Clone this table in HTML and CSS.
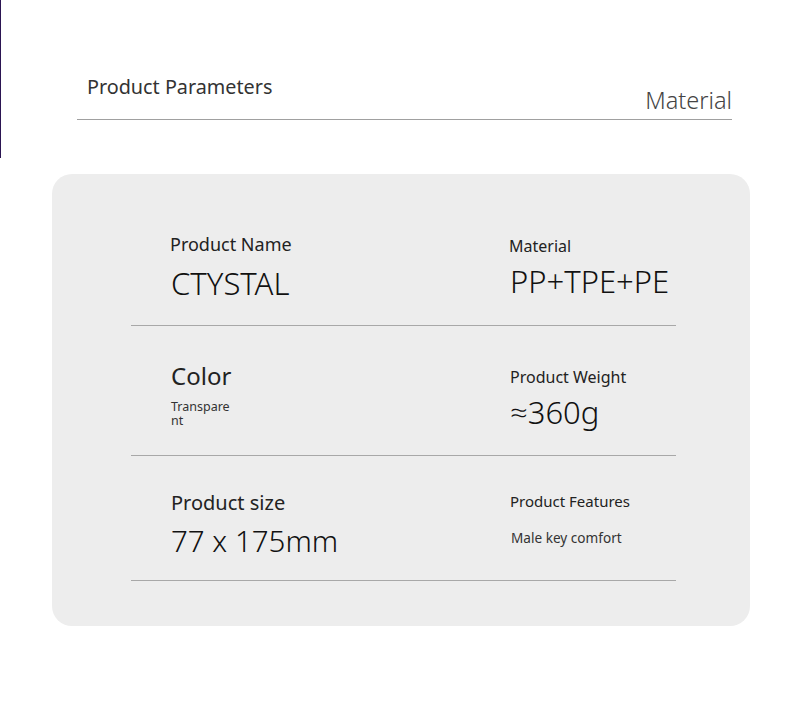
FILE: index.html
```html
<!DOCTYPE html>
<html lang="en">
<head>
<meta charset="utf-8">
<title>Product Parameters</title>
<link rel="stylesheet" href="styles.css">
</head>
<body>
<header class="header">
  <div class="header-bar">
    <h1 class="title">Product Parameters</h1>
    <div class="subtitle">Material</div>
  </div>
</header>
<section class="card">
  <div class="row row-1">
    <div class="cell">
      <div class="label label-md">Product Name</div>
      <div class="value">CTYSTAL</div>
    </div>
    <div class="cell">
      <div class="label label-sm">Material</div>
      <div class="value">PP+TPE+PE</div>
    </div>
  </div>
  <div class="row row-2">
    <div class="cell">
      <div class="label label-lg">Color</div>
      <div class="note">Transparent</div>
    </div>
    <div class="cell">
      <div class="label label-sm">Product Weight</div>
      <div class="value value-weight">≈360g</div>
    </div>
  </div>
  <div class="row row-3">
    <div class="cell">
      <div class="label label-xl">Product size</div>
      <div class="value value-size">77 x 175mm</div>
    </div>
    <div class="cell">
      <div class="label label-sm label-features">Product Features</div>
      <div class="small-value">Male key comfort</div>
    </div>
  </div>
</section>
</body>
</html>
```

FILE: styles.css
```css
html, body {
  margin: 0;
  padding: 0;
  background: #ffffff;
}
body {
  width: 800px;
  height: 705px;
  font-family: "Noto Sans", "Open Sans", sans-serif;
  color: #222;
  overflow: hidden;
}
.header {
  height: 158px;
  box-sizing: border-box;
  border-left: 1px solid #2b1552;
  padding-top: 71px;
}
.header-bar {
  margin-left: 76px;
  width: 655px;
  height: 49px;
  box-sizing: border-box;
  border-bottom: 1px solid #a0a0a0;
  display: flex;
  justify-content: space-between;
  align-items: flex-start;
}
.title {
  margin: 4px 0 0;
  padding-left: 10px;
  font-size: 19.8px;
  line-height: 24px;
  font-weight: 400;
  color: #333;
}
.subtitle {
  align-self: flex-end;
  font-size: 23.5px;
  line-height: 30px;
  font-weight: 300;
  color: #444;
  margin-bottom: 4px;
}
.card {
  margin: 16px 0 0 52px;
  width: 698px;
  height: 452px;
  box-sizing: border-box;
  background: #ededed;
  border-radius: 20px;
  padding: 0 74px 0 79px;
}
.row {
  display: grid;
  grid-template-columns: 339px 1fr;
  padding-left: 39px;
  box-sizing: border-box;
  border-bottom: 1px solid #a8a8a8;
}
.row-1 { height: 152px; padding-top: 58px; }
.row-2 { height: 130px; padding-top: 34px; }
.row-3 { height: 125px; padding-top: 33px; }
.cell {
  display: flex;
  flex-direction: column;
}
.label { color: #222; }
.label-sm { font-size: 16px; line-height: 20px; margin-top: 2px; margin-left: 1px; }
.row-1 .label-sm { margin-left: 0; margin-top: 4px; }
.row-2 .label-sm { margin-top: 7px; }
.label-features { font-size: 15px; }
.label-md { font-size: 18px; line-height: 24px; }
.label-lg { font-size: 24px; line-height: 32px; margin-left: 1px; }
.label-xl { font-size: 20px; line-height: 28px; margin-left: 1px; }
.value {
  font-size: 31px;
  line-height: 40px;
  font-weight: 300;
  color: #111;
  margin-top: 7px;
  margin-left: 1px;
}
.row-1 .label-sm + .value { margin-top: 5px; }
.value-weight { margin-top: 5px; }
.value-size { font-size: 29.5px; margin-top: 4px; }
.note {
  width: 64px;
  margin-left: 1px;
  font-size: 12.5px;
  line-height: 14px;
  color: #333;
  word-break: break-all;
  margin-top: 8px;
}
.small-value {
  font-size: 13.6px;
  line-height: 20px;
  color: #333;
  margin-top: 17px;
  margin-left: 2px;
}
```
